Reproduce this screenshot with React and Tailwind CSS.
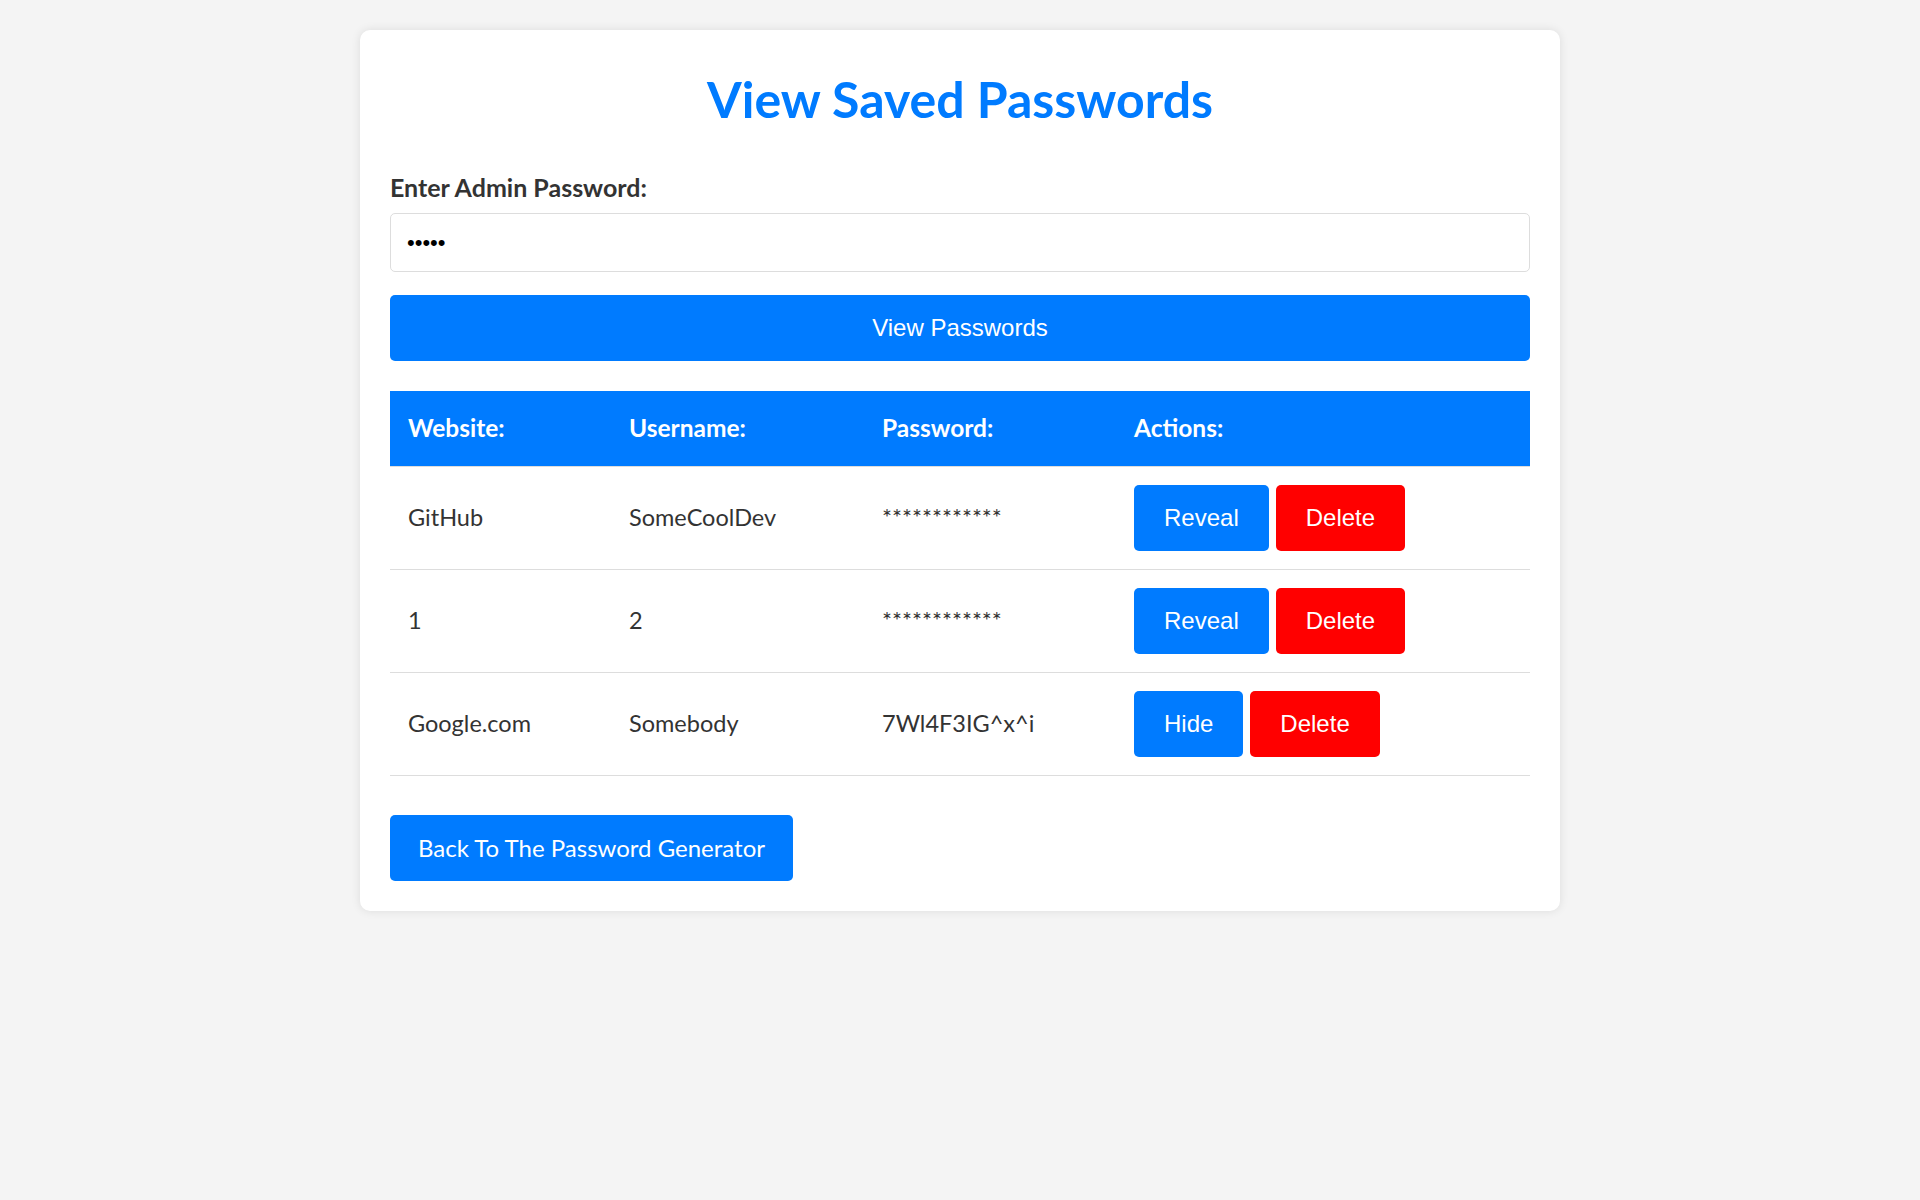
import React, { useState } from 'react';

const sans = 'font-["Lato","Noto_Sans",sans-serif]';
const arial = 'font-["Liberation_Sans",Arial,sans-serif]';

const initialRows = [
  { id: 1, website: 'GitHub', username: 'SomeCoolDev', password: 'hunter2hunte', shown: false },
  { id: 2, website: '1', username: '2', password: '3', shown: false },
  { id: 3, website: 'Google.com', username: 'Somebody', password: '7Wl4F3IG^x^i', shown: true },
];

const App = () => {
  const [rows, setRows] = useState(initialRows);
  const [adminPass, setAdminPass] = useState('admin');

  const toggle = (id) => setRows(rows.map(r => (r.id === id ? { ...r, shown: !r.shown } : r)));
  const remove = (id) => setRows(rows.filter(r => r.id !== id));

  return (
    <div className={`min-h-[1200px] bg-[#f4f4f4] pt-[30px] ${sans}`}>
      <div className="mx-auto w-[1200px] rounded-[10px] bg-white p-[30px] shadow-[0_0_10px_rgba(0,0,0,0.1)]">
        <h1 className="mt-[15px] text-center text-[50px] leading-[48px] font-bold text-[#007bff]">
          View Saved Passwords
        </h1>

        <label className="mt-[52px] block text-[25px] leading-[24px] font-bold text-[#333]">
          Enter Admin Password:
        </label>
        <input
          type="password"
          value={adminPass}
          onChange={(e) => setAdminPass(e.target.value)}
          className={`mt-[14px] block h-[59px] w-full rounded-[5px] border border-[#ddd] px-[16px] text-[22px] text-black outline-none ${arial}`}
        />

        <button className={`mt-[23px] flex h-[66px] w-full items-center justify-center rounded-[5px] bg-[#007bff] text-[24px] text-white ${arial}`}>
          View Passwords
        </button>

        {/* Saved entries */}
        <table className="mt-[30px] w-full table-fixed border-collapse text-left">
          <thead>
            <tr className="h-[75px] border-b border-[#ddd] bg-[#007bff] text-white">
              <th className="w-[221px] pl-[18px] text-[24.5px] font-bold">Website:</th>
              <th className="w-[253px] pl-[18px] text-[24.5px] font-bold">Username:</th>
              <th className="w-[252px] pl-[18px] text-[24.5px] font-bold">Password:</th>
              <th className="pl-[18px] text-[24.5px] font-bold">Actions:</th>
            </tr>
          </thead>
          <tbody>
            {rows.map((row) => (
              <tr key={row.id} className="h-[103px] border-b border-[#ddd] text-[23.5px] text-[#333]">
                <td className="pl-[18px]">{row.website}</td>
                <td className="pl-[18px]">{row.username}</td>
                <td className="pl-[18px]">{row.shown ? row.password : '************'}</td>
                <td className="pl-[18px]">
                  <div className={`flex gap-[7px] ${arial}`}>
                    <button
                      onClick={() => toggle(row.id)}
                      className="h-[66px] rounded-[5px] bg-[#007bff] px-[30px] text-[24px] text-white"
                    >
                      {row.shown ? 'Hide' : 'Reveal'}
                    </button>
                    <button
                      onClick={() => remove(row.id)}
                      className="h-[66px] rounded-[5px] bg-[#ff0000] px-[30px] text-[24px] text-white"
                    >
                      Delete
                    </button>
                  </div>
                </td>
              </tr>
            ))}
          </tbody>
        </table>

        <button className="mt-[39px] flex h-[66px] items-center rounded-[5px] bg-[#007bff] px-[28px] text-[24px] text-white">
          Back To The Password Generator
        </button>
      </div>
    </div>
  );
};

export default App;
